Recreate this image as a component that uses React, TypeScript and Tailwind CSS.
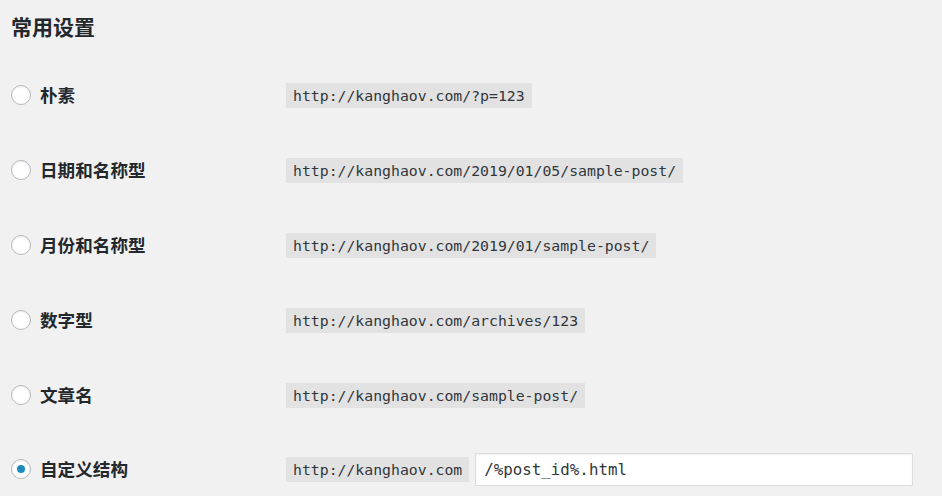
const rows = [
  { label: "朴素", url: "http://kanghaov.com/?p=123" },
  { label: "日期和名称型", url: "http://kanghaov.com/2019/01/05/sample-post/" },
  { label: "月份和名称型", url: "http://kanghaov.com/2019/01/sample-post/" },
  { label: "数字型", url: "http://kanghaov.com/archives/123" },
  { label: "文章名", url: "http://kanghaov.com/sample-post/" },
];

const cjk = "font-['Noto_Sans_CJK_SC','Noto_Sans',sans-serif]";
const mono = "font-['DejaVu_Sans_Mono','Liberation_Mono',monospace]";

function Radio({ checked }: { checked?: boolean }) {
  return (
    <span className="w-5 h-5 rounded-full border border-[#b4b9be] bg-white shadow-[inset_0_1px_2px_rgba(0,0,0,0.07)] flex items-center justify-center shrink-0">
      {checked && <span className="w-2 h-2 rounded-full bg-[#1e8cbe]" />}
    </span>
  );
}

function Code({ children }: { children: string }) {
  return (
    <code className={`${mono} text-[14.8px] leading-[25px] h-[25px] px-[7px] bg-[#e2e2e2] text-[#32373c] whitespace-nowrap`}>
      {children}
    </code>
  );
}

export default function App() {
  return (
    <div className={`${cjk} w-[942px] h-[496px] bg-[#f1f1f1] text-[#23282d] overflow-hidden`}>
      <div className="h-[58px] pl-[11px] pt-[10px]">
        <h2 className="text-[21px] leading-[32px] font-bold">常用设置</h2>
      </div>
      {rows.map((r) => (
        <div key={r.label} className="h-[75px] flex items-center">
          <div className="w-[286px] pl-[11px] flex items-center gap-[9px]">
            <Radio />
            <span className="text-[17.6px] font-bold">{r.label}</span>
          </div>
          <Code>{r.url}</Code>
        </div>
      ))}
      <div className="h-[73px] flex items-center">
        <div className="w-[286px] pl-[11px] flex items-center gap-[9px]">
          <Radio checked />
          <span className="text-[17.6px] font-bold">自定义结构</span>
        </div>
        <Code>http://kanghaov.com</Code>
        <div className={`${mono} ml-[6px] w-[438px] h-[33px] bg-white border border-[#dddddd] shadow-[inset_0_1px_2px_rgba(0,0,0,0.07)] pl-[8px] flex items-center text-[15.8px] text-[#32373c]`}>
          /%post_id%.html
        </div>
      </div>
    </div>
  );
}
